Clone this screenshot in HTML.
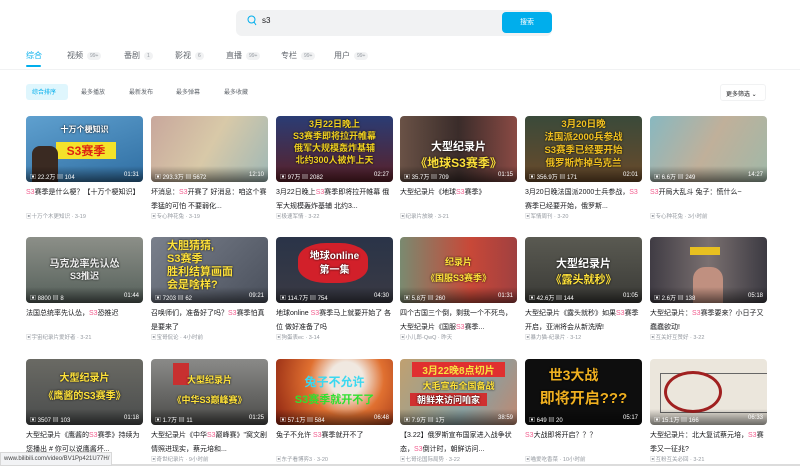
<!DOCTYPE html>
<html><head><meta charset="utf-8"><style>
*{margin:0;padding:0;box-sizing:border-box}
body{width:800px;height:466px;overflow:hidden;background:#fff;font-family:"Liberation Sans","Noto Sans CJK SC",sans-serif;color:#18191c;position:relative}
.a{position:absolute}
.tab{position:absolute;top:50px;font-size:8px;color:#61666d;white-space:nowrap}
.tab b{font-weight:normal;font-size:5px;color:#9499a0;background:#f1f2f3;border-radius:5px;padding:1px 3px;margin-left:4px;vertical-align:1px}
.chip{position:absolute;top:87px;font-size:6px;color:#61666d}
.card{position:absolute;width:117px}
.th{width:117px;height:66px;border-radius:4px;position:relative;overflow:hidden}
.th .st{position:absolute;left:0;right:0;bottom:0;height:16px;background:linear-gradient(transparent,rgba(0,0,0,.55));font-size:6px;color:#fff;padding:6px 4px 0}
.th .st span{float:right}
.th .tx{position:absolute;left:0;right:0;text-align:center;font-weight:bold;color:#ffe23a;text-shadow:0 0 2px #000}
.tt{font-size:7px;line-height:14px;margin-top:4px;height:28px;color:#18191c;overflow:hidden}
.tt i{font-style:normal;color:#f25d8e}
.au{font-size:5.5px;color:#9499a0;margin-top:-2px}
</style></head><body>
<div class="a" style="left:236px;top:10px;width:316px;height:26px;background:#f1f2f3;border-radius:6px"></div>
<svg class="a" style="left:247px;top:15px" width="10" height="12"><circle cx="4.5" cy="4.5" r="3.5" stroke="#00aeec" fill="none" stroke-width="1"/><line x1="7" y1="7" x2="9" y2="10" stroke="#00aeec" stroke-width="1"/></svg>
<div class="a" style="left:262px;top:16px;font-size:8px;color:#18191c">s3</div>
<div class="a" style="left:502px;top:12px;width:50px;height:21px;background:#00aeec;border-radius:4px;color:#fff;font-size:7px;text-align:center;line-height:21px">搜索</div>

<div class="tab" style="left:26px;color:#00aeec">综合</div>
<div class="tab" style="left:67px">视频<b>99+</b></div>
<div class="tab" style="left:124px">番剧<b>1</b></div>
<div class="tab" style="left:175px">影视<b>6</b></div>
<div class="tab" style="left:226px">直播<b>99+</b></div>
<div class="tab" style="left:281px">专栏<b>99+</b></div>
<div class="tab" style="left:334px">用户<b>99+</b></div>
<div class="a" style="left:26px;top:65px;width:15px;height:2px;background:#00aeec;border-radius:1px"></div>
<div class="a" style="left:0;top:69px;width:800px;height:1px;background:#f1f2f3"></div>

<div class="a" style="left:26px;top:84px;width:42px;height:16px;background:#dff6fd;border-radius:3px"></div>
<div class="chip" style="left:32px;color:#00aeec">综合排序</div>
<div class="chip" style="left:81px">最多播放</div>
<div class="chip" style="left:129px">最新发布</div>
<div class="chip" style="left:176px">最多弹幕</div>
<div class="chip" style="left:224px">最多收藏</div>
<div class="a" style="left:720px;top:84px;width:46px;height:17px;border:1px solid #f1f2f3;border-radius:3px;font-size:6px;color:#18191c;padding:4px 0 0 5px">更多筛选 ⌄</div>

<!-- Row 1 -->
<div class="card" style="left:26px;top:116px"><div class="th" style="background:linear-gradient(160deg,#5fa0cf,#2f6ea2)"><div class="tx" style="top:8px;font-size:8px;color:#fff">十万个梗知识</div><div class="tx" style="top:26px;font-size:12px;left:30px;background:#f4e22a;color:#d21;width:60px;text-shadow:none">S3赛季</div><div class="a" style="left:6px;top:30px;width:26px;height:36px;background:#3a2a22;border-radius:8px 8px 0 0"></div><div class="st">▣ 22.2万 ▤ 104<span>01:31</span></div></div><div class="tt"><i>S3</i>赛季是什么梗？【十万个梗知识】</div><div class="au">▣十万个木更知识 · 3-19</div></div>
<div class="card" style="left:151px;top:116px"><div class="th" style="background:linear-gradient(120deg,#c8a79c,#d8c9a8 50%,#9fb8b6)"><div class="st">▣ 293.3万 ▤ 5672<span>12:10</span></div></div><div class="tt">坏消息：<i>S3</i>开赛了 好消息：咱这个赛季猛的可怕 不要弱化...</div><div class="au">▣专心种花兔 · 3-19</div></div>
<div class="card" style="left:276px;top:116px"><div class="th" style="background:linear-gradient(#2a3c74,#5a2028)"><div class="tx" style="top:2px;font-size:9px;line-height:12px;color:#f0d020">3月22日晚上<br>S3赛季即将拉开帷幕<br>俄军大规模轰炸基辅<br>北约300人被炸上天</div><div class="st">▣ 97万 ▤ 2082<span>02:27</span></div></div><div class="tt">3月22日晚上<i>S3</i>赛季即将拉开帷幕 俄军大规模轰炸基辅 北约3...</div><div class="au">▣极速军情 · 3-22</div></div>
<div class="card" style="left:400px;top:116px"><div class="th" style="background:linear-gradient(90deg,#6a5246,#3a2c2a 50%,#8a4a44)"><div class="tx" style="top:22px;font-size:11px;color:#fff">大型纪录片</div><div class="tx" style="top:38px;font-size:12px">《地球S3赛季》</div><div class="st">▣ 35.7万 ▤ 709<span>01:15</span></div></div><div class="tt">大型纪录片《地球<i>S3</i>赛季》</div><div class="au">▣纪录片放映 · 3-21</div></div>
<div class="card" style="left:525px;top:116px"><div class="th" style="background:linear-gradient(#3a4a3a,#6a4a2a)"><div class="tx" style="top:2px;font-size:9.5px;line-height:13px;color:#f0c020">3月20日晚<br>法国派2000兵参战<br>S3赛季已经要开始<br>俄罗斯炸掉乌克兰</div><div class="st">▣ 356.9万 ▤ 171<span>02:01</span></div></div><div class="tt">3月20日晚法国派2000士兵参战，<i>S3</i>赛季已经要开始，俄罗斯...</div><div class="au">▣军情周刊 · 3-20</div></div>
<div class="card" style="left:650px;top:116px"><div class="th" style="background:linear-gradient(120deg,#88b8c0,#c0b09a 50%,#a0b8a8)"><div class="st">▣ 6.6万 ▤ 249<span>14:27</span></div></div><div class="tt"><i>S3</i>开局大乱斗 兔子：慌什么~</div><div class="au">▣专心种花兔 · 3小时前</div></div>

<!-- Row 2 -->
<div class="card" style="left:26px;top:237px"><div class="th" style="background:linear-gradient(#8c8f88,#55605a)"><div class="tx" style="top:18px;font-size:10px;color:#eee">马克龙率先认怂</div><div class="tx" style="top:32px;font-size:9px;color:#eee">S3推迟</div><div class="st">▣ 8800 ▤ 8<span>01:44</span></div></div><div class="tt">法国总统率先认怂，<i>S3</i>恐推迟</div><div class="au">▣宇宙纪录片爱好者 · 3-21</div></div>
<div class="card" style="left:151px;top:237px"><div class="th" style="background:linear-gradient(135deg,#7a808c,#4a505c)"><div class="tx" style="top:3px;left:16px;text-align:left;font-size:11px;line-height:13px">大胆猜猜,<br>S3赛季<br>胜利结算画面<br>会是啥样?</div><div class="st">▣ 7203 ▤ 62<span>09:21</span></div></div><div class="tt">召唤师们，准备好了吗？<i>S3</i>赛季怕真是要来了</div><div class="au">▣宝哥侃论 · 4小时前</div></div>
<div class="card" style="left:276px;top:237px"><div class="th" style="background:linear-gradient(#2a3448,#3a3a44)"><div class="a" style="left:22px;top:6px;width:70px;height:40px;background:#d2202a;border-radius:40%"></div><div class="tx" style="top:10px;font-size:10px;color:#fff">地球online</div><div class="tx" style="top:24px;font-size:10px;color:#fff">第一集</div><div class="st">▣ 114.7万 ▤ 754<span>04:30</span></div></div><div class="tt">地球online <i>S3</i>赛季马上就要开始了 各位 做好准备了吗</div><div class="au">▣狗蛋表ec · 3-14</div></div>
<div class="card" style="left:400px;top:237px"><div class="th" style="background:linear-gradient(90deg,#7a8a70,#c84838 60%,#a04040)"><div class="tx" style="top:18px;font-size:9px">纪录片</div><div class="tx" style="top:34px;font-size:9px">《国服S3赛季》</div><div class="st">▣ 5.8万 ▤ 260<span>01:31</span></div></div><div class="tt">四个古国三个倒，剩我一个不死鸟，大型纪录片《国服<i>S3</i>赛季...</div><div class="au">▣小儿郎-QwQ · 昨天</div></div>
<div class="card" style="left:525px;top:237px"><div class="th" style="background:linear-gradient(#5a5a52,#3a3a36)"><div class="tx" style="top:18px;font-size:11px;color:#fff">大型纪录片</div><div class="tx" style="top:34px;font-size:11px">《露头就秒》</div><div class="st">▣ 42.6万 ▤ 144<span>01:05</span></div></div><div class="tt">大型纪录片《露头就秒》如果<i>S3</i>赛季开启，亚洲将会从新洗牌!</div><div class="au">▣暴力猫-纪录片 · 3-12</div></div>
<div class="card" style="left:650px;top:237px"><div class="th" style="background:linear-gradient(90deg,#403c44,#7a7070 50%,#3c3a42)"><div class="a" style="left:43px;top:30px;width:30px;height:36px;background:#c09080;border-radius:12px 12px 0 0"></div><div class="a" style="left:40px;top:10px;width:30px;height:8px;background:#e8c020"></div><div class="st">▣ 2.6万 ▤ 138<span>05:18</span></div></div><div class="tt">大型纪录片：<i>S3</i>赛季要来？小日子又蠢蠢欲动!</div><div class="au">▣互关好互赞好 · 3-22</div></div>

<!-- Row 3 -->
<div class="card" style="left:26px;top:359px"><div class="th" style="background:linear-gradient(#6a6a64,#4a4c4c)"><div class="tx" style="top:10px;font-size:10px">大型纪录片</div><div class="tx" style="top:28px;font-size:10px">《鹰酱的S3赛季》</div><div class="st">▣ 3507 ▤ 103<span>01:18</span></div></div><div class="tt">大型纪录片《鹰酱的<i>S3</i>赛季》持续为您播出 # 你可以说鹰酱坏...</div><div class="au">▣ · 3-20</div></div>
<div class="card" style="left:151px;top:359px"><div class="th" style="background:linear-gradient(#8a8a88,#4a4a48)"><div class="a" style="left:22px;top:4px;width:16px;height:22px;background:#c83030"></div><div class="tx" style="top:14px;font-size:9px">大型纪录片</div><div class="tx" style="top:34px;font-size:9px">《中华S3巅峰赛》</div><div class="st">▣ 1.7万 ▤ 11<span>01:25</span></div></div><div class="tt">大型纪录片《中华<i>S3</i>巅峰赛》"窝文剧情照进现实，蔡元培和...</div><div class="au">▣奇世纪录片 · 9小时前</div></div>
<div class="card" style="left:276px;top:359px"><div class="th" style="background:radial-gradient(circle at 60% 30%,#f0e8e0 20%,#e07030 45%,#8a2010)"><div class="tx" style="top:14px;font-size:12px;color:#3ad8f0;text-shadow:none">兔子不允许</div><div class="tx" style="top:32px;font-size:11px;color:#30e030;text-shadow:none">S3赛季就开不了</div><div class="st">▣ 57.1万 ▤ 584<span>06:48</span></div></div><div class="tt">兔子不允许 <i>S3</i>赛季就开不了</div><div class="au">▣东子看博弈3 · 3-20</div></div>
<div class="card" style="left:400px;top:359px"><div class="th" style="background:linear-gradient(120deg,#c0a070,#8aa0a0 60%,#c08870)"><div class="tx" style="top:3px;font-size:10px;left:12px;right:12px;background:#e03030;color:#f8e040;text-shadow:none">3月22晚8点切片</div><div class="tx" style="top:20px;font-size:9px">大毛宣布全国备战</div><div class="tx" style="top:34px;font-size:9px;left:10px;right:30px;background:#d03030;color:#fff">朝鲜来访问咱家</div><div class="st">▣ 7.9万 ▤ 1万<span>38:59</span></div></div><div class="tt">【3.22】俄罗斯宣布国家进入战争状态，<i>S3</i>倒计时，朝鲜访问...</div><div class="au">▣七哥论国际局势 · 3-22</div></div>
<div class="card" style="left:525px;top:359px"><div class="th" style="background:#0e0e0e"><div class="tx" style="top:6px;left:-20px;font-size:14px;color:#f0b020">世3大战</div><div class="tx" style="top:28px;font-size:15px;color:#f0b020">即将开启???</div><div class="st">▣ 649 ▤ 20<span>05:17</span></div></div><div class="tt"><i>S3</i>大战即将开启？？？</div><div class="au">▣喵爱吃香菜 · 10小时前</div></div>
<div class="card" style="left:650px;top:359px"><div class="th" style="background:#ebe6dc"><div class="a" style="left:10px;top:14px;width:110px;height:40px;border:1px solid #666"></div><div class="a" style="left:14px;top:12px;width:58px;height:42px;border:3px solid #a02020;border-radius:50%"></div><div class="st">▣ 15.1万 ▤ 166<span>06:33</span></div></div><div class="tt">大型纪录片：北大复试蔡元培，<i>S3</i>赛季又一征兆?</div><div class="au">▣互粉互关必回 · 3-21</div></div>

<div class="a" style="left:0;top:452px;width:112px;height:14px;background:#f2f3f5;border:1px solid #d8d8d8;font-size:6px;color:#444;padding:3px 0 0 3px;white-space:nowrap;overflow:hidden">www.bilibili.com/video/BV1Pp421U77H/</div>
<div class="a" style="left:112px;top:464px;width:688px;height:2px;background:#dcdcdc"></div>
</body></html>
